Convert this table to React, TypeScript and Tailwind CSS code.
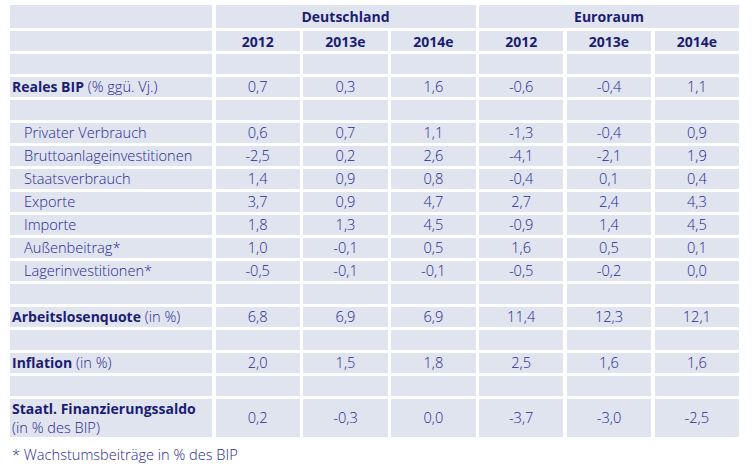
const years = ["2012", "2013e", "2014e", "2012", "2013e", "2014e"];

type Row =
  | { kind: "empty" }
  | { kind: "data"; label: string; unit?: string; bold?: boolean; values: string[]; tall?: boolean };

const rows: Row[] = [
  { kind: "empty" },
  { kind: "data", label: "Reales BIP", unit: "(% ggü. Vj.)", bold: true, values: ["0,7", "0,3", "1,6", "-0,6", "-0,4", "1,1"] },
  { kind: "empty" },
  { kind: "data", label: "Privater Verbrauch", values: ["0,6", "0,7", "1,1", "-1,3", "-0,4", "0,9"] },
  { kind: "data", label: "Bruttoanlageinvestitionen", values: ["-2,5", "0,2", "2,6", "-4,1", "-2,1", "1,9"] },
  { kind: "data", label: "Staatsverbrauch", values: ["1,4", "0,9", "0,8", "-0,4", "0,1", "0,4"] },
  { kind: "data", label: "Exporte", values: ["3,7", "0,9", "4,7", "2,7", "2,4", "4,3"] },
  { kind: "data", label: "Importe", values: ["1,8", "1,3", "4,5", "-0,9", "1,4", "4,5"] },
  { kind: "data", label: "Außenbeitrag*", values: ["1,0", "-0,1", "0,5", "1,6", "0,5", "0,1"] },
  { kind: "data", label: "Lagerinvestitionen*", values: ["-0,5", "-0,1", "-0,1", "-0,5", "-0,2", "0,0"] },
  { kind: "empty" },
  { kind: "data", label: "Arbeitslosenquote", unit: "(in %)", bold: true, values: ["6,8", "6,9", "6,9", "11,4", "12,3", "12,1"] },
  { kind: "empty" },
  { kind: "data", label: "Inflation", unit: "(in %)", bold: true, values: ["2,0", "1,5", "1,8", "2,5", "1,6", "1,6"] },
  { kind: "empty" },
  { kind: "data", label: "Staatl. Finanzierungssaldo", unit: "(in % des BIP)", bold: true, tall: true, values: ["0,2", "-0,3", "0,0", "-3,7", "-3,0", "-2,5"] },
];

const cell = "bg-[#dfe4ef] h-[20px] flex items-center";
const strong = "font-bold text-[14px] text-[#1c1c72]";

export default function App() {
  return (
    <div className="min-h-screen bg-white pl-[10px] pt-[5px] text-[14.6px] font-light text-[#28288f] font-['Open_Sans',sans-serif]">
      <div className="grid w-[729px] grid-cols-[202px_repeat(6,minmax(0,1fr))] gap-x-[3.5px] gap-y-[3px]">
        {/* Kopfzeile */}
        <div className="bg-[#dfe4ef] h-[23px]" />
        <div className={`col-span-3 bg-[#dfe4ef] h-[23px] flex items-center justify-center ${strong}`}>
          Deutschland
        </div>
        <div className={`col-span-3 bg-[#dfe4ef] h-[23px] flex items-center justify-center ${strong}`}>
          Euroraum
        </div>

        {/* Jahre */}
        <div className={cell} />
        {years.map((y, i) => (
          <div key={i} className={`${cell} justify-center ${strong}`}>
            {y}
          </div>
        ))}

        {rows.map((row, r) =>
          row.kind === "empty" ? (
            Array.from({ length: 7 }).map((_, i) => <div key={`${r}-${i}`} className={cell} />)
          ) : (
            <>
              <div
                key={`${r}-l`}
                className={`bg-[#dfe4ef] flex ${row.tall ? "h-[38px] flex-col justify-center leading-[18px]" : "h-[20px] items-center"} ${row.bold ? "pl-[2px]" : "pl-[14px]"}`}
              >
                {row.tall ? (
                  <>
                    <span className={`${strong} whitespace-nowrap`}>{row.label}</span>
                    <span className="whitespace-nowrap">{row.unit}</span>
                  </>
                ) : (
                  <span className="whitespace-nowrap">
                    <span className={row.bold ? strong : ""}>{row.label}</span>
                    {row.unit && <span> {row.unit}</span>}
                  </span>
                )}
              </div>
              {row.values.map((v, i) => (
                <div
                  key={`${r}-${i}`}
                  className={`bg-[#dfe4ef] flex items-center justify-center ${row.tall ? "h-[38px]" : "h-[20px]"}`}
                >
                  {v}
                </div>
              ))}
            </>
          )
        )}
      </div>
      <p className="mt-[7px] pl-[2px]">* Wachstumsbeiträge in % des BIP</p>
    </div>
  );
}
